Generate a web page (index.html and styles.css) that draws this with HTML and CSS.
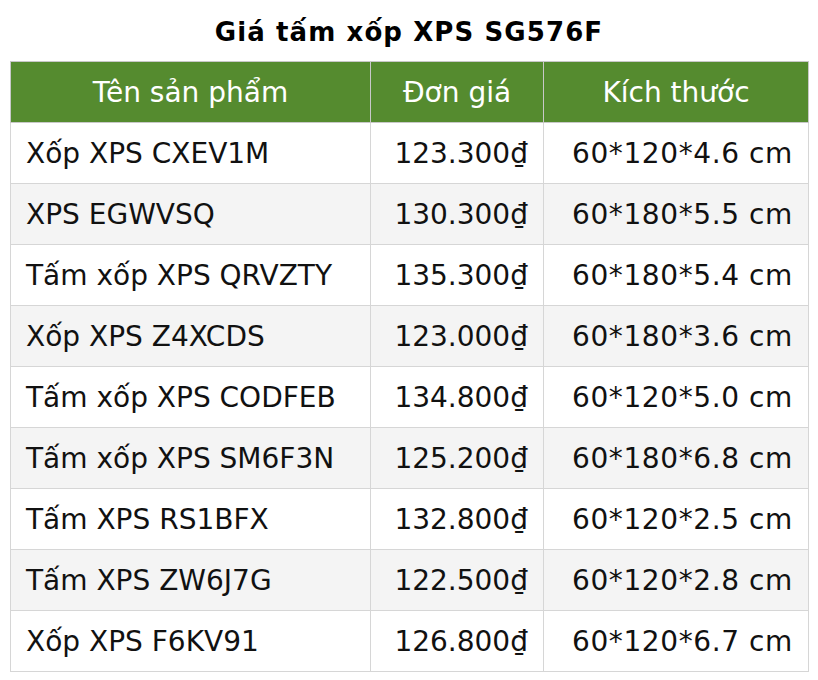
FILE: index.html
```html
<!DOCTYPE html>
<html lang="vi">
<head>
<meta charset="utf-8">
<link rel="stylesheet" href="styles.css">
</head>
<body>
<div class="wrap">
  <h1 class="title">Giá tấm xốp XPS SG576F</h1>
  <table class="price">
    <colgroup><col class="c1"><col class="c2"><col class="c3"></colgroup>
    <thead>
      <tr><th>Tên sản phẩm</th><th>Đơn giá</th><th>Kích thước</th></tr>
    </thead>
    <tbody>
      <tr><td>Xốp XPS CXEV1M</td><td class="num">123.300₫</td><td class="num size">60*120*4.6 cm</td></tr>
      <tr><td>XPS EGWVSQ</td><td class="num">130.300₫</td><td class="num size">60*180*5.5 cm</td></tr>
      <tr><td>Tấm xốp XPS QRVZTY</td><td class="num">135.300₫</td><td class="num size">60*180*5.4 cm</td></tr>
      <tr><td>Xốp XPS Z4XCDS</td><td class="num">123.000₫</td><td class="num size">60*180*3.6 cm</td></tr>
      <tr><td>Tấm xốp XPS CODFEB</td><td class="num">134.800₫</td><td class="num size">60*120*5.0 cm</td></tr>
      <tr><td>Tấm xốp XPS SM6F3N</td><td class="num">125.200₫</td><td class="num size">60*180*6.8 cm</td></tr>
      <tr><td>Tấm XPS RS1BFX</td><td class="num">132.800₫</td><td class="num size">60*120*2.5 cm</td></tr>
      <tr><td>Tấm XPS ZW6J7G</td><td class="num">122.500₫</td><td class="num size">60*120*2.8 cm</td></tr>
      <tr><td>Xốp XPS F6KV91</td><td class="num">126.800₫</td><td class="num size">60*120*6.7 cm</td></tr>
    </tbody>
  </table>
</div>
</body>
</html>
```
FILE: styles.css
```css
html, body {
  margin: 0;
  padding: 0;
  background: #ffffff;
}
.wrap {
  padding: 0 10px;
  font-family: "DejaVu Sans", Verdana, sans-serif;
  color: #111111;
}
.title {
  margin: 0;
  height: 61px;
  line-height: 64px;
  text-align: center;
  font-size: 26px;
  letter-spacing: 1.1px;
  font-weight: bold;
  color: #000000;
}
.price {
  width: 798px;
  border-collapse: collapse;
  table-layout: fixed;
  font-size: 28px;
}
.c1 { width: 360px; }
.c2 { width: 173px; }
.c3 { width: 265px; }
.price th {
  background: #558b2f;
  color: #ffffff;
  font-weight: normal;
  height: 60px;
  padding: 0;
  text-align: center;
  border: 1px solid #c8c8c8;
}
.price td {
  height: 60px;
  padding: 0 15px;
  border: 1px solid #d6d6d6;
  white-space: nowrap;
}
.price tbody tr:nth-child(even) td {
  background: #f4f4f4;
}
.price td.num {
  text-align: right;
}
.price td.size {
  letter-spacing: 0.6px;
  padding-right: 15px;
}
```
